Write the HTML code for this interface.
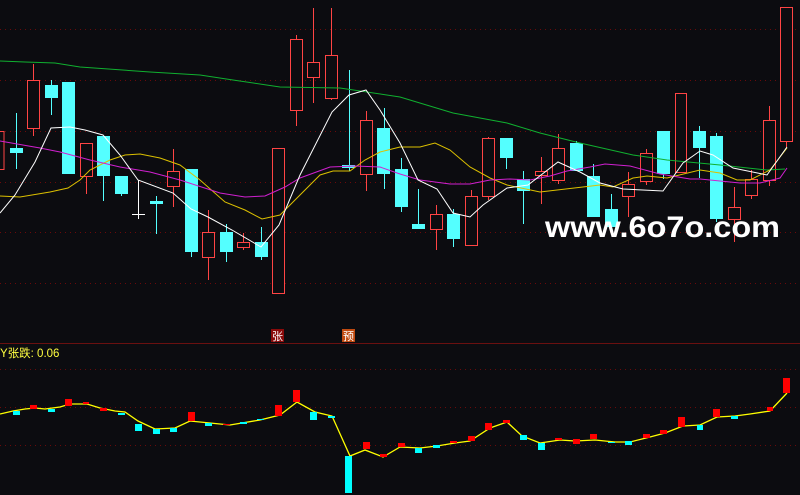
<!DOCTYPE html>
<html><head><meta charset="utf-8"><style>
html,body{margin:0;padding:0;background:#0c0c10;width:800px;height:495px;overflow:hidden}
svg{display:block}
</style></head><body>
<svg width="800" height="495" viewBox="0 0 800 495" xmlns="http://www.w3.org/2000/svg" shape-rendering="crispEdges">
<rect width="800" height="495" fill="#0c0c10"/>
<g stroke="#6a0a0a" stroke-width="1" stroke-dasharray="1,4">
<line x1="0" y1="29.5" x2="800" y2="29.5"/>
<line x1="0" y1="80.5" x2="800" y2="80.5"/>
<line x1="0" y1="131.5" x2="800" y2="131.5"/>
<line x1="0" y1="182.5" x2="800" y2="182.5"/>
<line x1="0" y1="232.5" x2="800" y2="232.5"/>
<line x1="0" y1="283.5" x2="800" y2="283.5"/>
<line x1="0" y1="369.5" x2="800" y2="369.5"/>
<line x1="0" y1="407.5" x2="800" y2="407.5"/>
<line x1="0" y1="445.5" x2="800" y2="445.5"/>
</g>
<line x1="0" y1="343.5" x2="800" y2="343.5" stroke="#6a1010" stroke-width="1"/>

<g fill="#54ffff" stroke="#54ffff">
<line x1="16.5" y1="113" x2="16.5" y2="169"/><rect x="10" y="148" width="13" height="5" stroke="none"/>
<line x1="51.5" y1="80" x2="51.5" y2="115"/><rect x="45" y="85" width="13" height="13" stroke="none"/>
<rect x="62" y="82" width="13" height="92" stroke="none"/>
<line x1="103.5" y1="136" x2="103.5" y2="201"/><rect x="97" y="136" width="13" height="40" stroke="none"/>
<line x1="121.5" y1="176" x2="121.5" y2="196"/><rect x="115" y="176" width="13" height="18" stroke="none"/>
<line x1="156.5" y1="196" x2="156.5" y2="234"/><rect x="150" y="201" width="13" height="3" stroke="none"/>
<line x1="191.5" y1="169" x2="191.5" y2="257"/><rect x="185" y="169" width="13" height="83" stroke="none"/>
<line x1="226.5" y1="224" x2="226.5" y2="262"/><rect x="220" y="232" width="13" height="20" stroke="none"/>
<line x1="261.5" y1="227" x2="261.5" y2="260"/><rect x="255" y="242" width="13" height="15" stroke="none"/>
<line x1="349.5" y1="70" x2="349.5" y2="171"/><rect x="342" y="165" width="13" height="3" stroke="none"/>
<line x1="384.5" y1="108" x2="384.5" y2="189"/><rect x="377" y="128" width="13" height="46" stroke="none"/>
<line x1="401.5" y1="158" x2="401.5" y2="212"/><rect x="395" y="169" width="13" height="38" stroke="none"/>
<line x1="418.5" y1="189" x2="418.5" y2="229"/><rect x="412" y="224" width="13" height="5" stroke="none"/>
<line x1="453.5" y1="209" x2="453.5" y2="247"/><rect x="447" y="214" width="13" height="25" stroke="none"/>
<line x1="506.5" y1="138" x2="506.5" y2="169"/><rect x="500" y="138" width="13" height="20" stroke="none"/>
<line x1="523.5" y1="171" x2="523.5" y2="224"/><rect x="517" y="179" width="13" height="12" stroke="none"/>
<line x1="576.5" y1="141" x2="576.5" y2="171"/><rect x="570" y="143" width="13" height="28" stroke="none"/>
<line x1="593.5" y1="164" x2="593.5" y2="217"/><rect x="587" y="176" width="13" height="41" stroke="none"/>
<line x1="611.5" y1="194" x2="611.5" y2="227"/><rect x="605" y="209" width="13" height="18" stroke="none"/>
<line x1="663.5" y1="131" x2="663.5" y2="179"/><rect x="657" y="131" width="13" height="43" stroke="none"/>
<line x1="699.5" y1="126" x2="699.5" y2="178"/><rect x="693" y="131" width="13" height="17" stroke="none"/>
<line x1="716.5" y1="133" x2="716.5" y2="222"/><rect x="710" y="136" width="13" height="83" stroke="none"/>
</g>
<g stroke="#ffffff"><line x1="138.5" y1="180" x2="138.5" y2="219"/><line x1="132" y1="214.5" x2="145" y2="214.5"/></g>

<g stroke="#ff4444" fill="#0c0c10">
<rect x="-5" y="131.5" width="9" height="38"/>
<line x1="33.5" y1="64" x2="33.5" y2="136"/><rect x="27.5" y="80.5" width="12" height="48"/>
<line x1="86.5" y1="143" x2="86.5" y2="194"/><rect x="80.5" y="143.5" width="12" height="33"/>
<line x1="173.5" y1="149" x2="173.5" y2="207"/><rect x="167.5" y="171.5" width="12" height="15"/>
<line x1="208.5" y1="210" x2="208.5" y2="280"/><rect x="202.5" y="232.5" width="12" height="25"/>
<line x1="243.5" y1="233" x2="243.5" y2="250"/><rect x="237.5" y="242.5" width="12" height="5"/>
<rect x="272.5" y="148.5" width="12" height="145"/>
<line x1="296.5" y1="35" x2="296.5" y2="126"/><rect x="290.5" y="39.5" width="12" height="71"/>
<line x1="313.5" y1="8" x2="313.5" y2="103"/><rect x="307.5" y="62.5" width="12" height="15"/>
<line x1="331.5" y1="8" x2="331.5" y2="100"/><rect x="325.5" y="55.5" width="12" height="43"/>
<line x1="366.5" y1="111" x2="366.5" y2="191"/><rect x="360.5" y="120.5" width="12" height="54"/>
<line x1="436.5" y1="205" x2="436.5" y2="250"/><rect x="430.5" y="214.5" width="12" height="15"/>
<line x1="471.5" y1="190" x2="471.5" y2="245"/><rect x="465.5" y="196.5" width="12" height="49"/>
<line x1="488.5" y1="137" x2="488.5" y2="200"/><rect x="482.5" y="138.5" width="12" height="58"/>
<line x1="541.5" y1="157" x2="541.5" y2="204"/><rect x="535.5" y="171.5" width="12" height="4"/>
<line x1="558.5" y1="134" x2="558.5" y2="184"/><rect x="552.5" y="148.5" width="12" height="32"/>
<line x1="628.5" y1="172" x2="628.5" y2="217"/><rect x="622.5" y="184.5" width="12" height="12"/>
<line x1="646.5" y1="149" x2="646.5" y2="185"/><rect x="640.5" y="153.5" width="12" height="28"/>
<rect x="675.5" y="93.5" width="11" height="79"/>
<line x1="734.5" y1="187" x2="734.5" y2="242"/><rect x="728.5" y="207.5" width="12" height="12"/>
<line x1="751.5" y1="170" x2="751.5" y2="199"/><rect x="745.5" y="179.5" width="12" height="16"/>
<line x1="769.5" y1="106" x2="769.5" y2="186"/><rect x="763.5" y="120.5" width="12" height="60"/>
<line x1="786.5" y1="141" x2="786.5" y2="147"/><rect x="780.5" y="7.5" width="12" height="134"/>
</g>

<g fill="none" stroke-width="1" shape-rendering="auto">
<polyline stroke="#10b030" points="0,61 25,62 55,63 80,67 150,72 200,75 233,80 280,87 340,88 400,97 453,113 507,123 540,133 580,143 633,155 667,160 720,165 767,170 785,169"/>
<polyline stroke="#dcc000" points="0,196 20,197 50,192 68,188 80,180 90,170 110,160 125,155 140,154 160,158 180,165 200,180 225,202 245,210 262,219 280,215 300,195 320,175 333,171 350,171 365,160 380,152 400,147 420,147 435,143 450,150 470,167 490,178 507,185 540,192 600,185 613,187 633,178 647,176 667,178 700,170 720,173 737,180 750,180 770,170 787,148"/>
<polyline stroke="#d020d0" points="0,141 40,148 60,152 90,160 120,167 150,172 180,180 220,193 245,197 265,196 285,187 300,178 330,167 355,166 380,167 400,174 420,180 450,184 470,184 490,180 510,179 530,180 550,176 567,171 590,167 605,164 630,166 660,174 690,179 700,179 720,181 740,183 760,183 780,178 787,168"/>
<polyline stroke="#ffffff" points="0,213 15,195 35,162 51,128 70,127 85,130 103,135 120,155 138,180 173,193 191,209 208,217 232,230 261,247 279,225 300,175 332,112 349,95 366,90 380,110 400,143 418,180 437,189 453,213 470,217 483,205 507,188 528,185 558,162 580,172 600,183 623,189 663,191 683,163 700,151 713,155 733,168 767,175 787,147"/>
</g>

<text x="545" y="237" fill="#ffffff" font-family="Liberation Sans, DejaVu Sans, sans-serif" font-weight="bold" font-size="30" textLength="235" lengthAdjust="spacingAndGlyphs">www.6o7o.com</text>

<rect x="271" y="329" width="13" height="13" fill="#8a0a0a"/>
<text x="277.5" y="340" fill="#ffffff" font-family="Noto Sans CJK SC, sans-serif" font-size="11" text-anchor="middle">张</text>
<rect x="342" y="329" width="13" height="13" fill="#c04a10"/>
<text x="348.5" y="340" fill="#ffffff" font-family="Noto Sans CJK SC, sans-serif" font-size="11" text-anchor="middle">预</text>

<text x="0" y="357" fill="#ffff40" font-family="Liberation Sans, Noto Sans CJK SC, sans-serif" font-size="11.5">Y张跌: 0.06</text>

<polyline fill="none" stroke="#ffff00" stroke-width="1.3" shape-rendering="auto" points="0,414 13,411 25,409 35,408 45,409 60,407 70,404 87,404 100,408 115,411 125,412 138,421 155,429 175,428 190,421 210,423 230,425 260,420 280,415 297,402 315,412 332,416 350,456 365,450 383,457 400,447 420,448 437,446 455,443 470,441 490,428 507,422 522,436 540,443 560,440 575,441 595,440 615,442 630,442 650,437 665,433 683,426 700,425 717,417 735,416 750,414 770,411 787,393"/>
<g fill="#ff0000">
<rect x="30" y="405" width="7" height="4"/><rect x="65" y="399" width="7" height="7"/><rect x="83" y="402" width="6" height="2"/>
<rect x="100" y="408" width="7" height="3"/><rect x="188" y="412" width="7" height="9"/><rect x="223" y="424" width="7" height="1"/>
<rect x="275" y="405" width="7" height="11"/><rect x="293" y="390" width="7" height="12"/><rect x="363" y="442" width="7" height="7"/>
<rect x="380" y="454" width="7" height="3"/><rect x="398" y="443" width="7" height="4"/><rect x="450" y="441" width="7" height="2"/>
<rect x="468" y="436" width="7" height="5"/><rect x="485" y="423" width="7" height="7"/><rect x="503" y="420" width="7" height="3"/>
<rect x="555" y="438" width="7" height="2"/><rect x="573" y="439" width="7" height="5"/><rect x="590" y="434" width="7" height="5"/>
<rect x="643" y="434" width="7" height="4"/><rect x="660" y="430" width="7" height="4"/><rect x="678" y="417" width="7" height="10"/>
<rect x="713" y="409" width="7" height="8"/><rect x="767" y="407" width="6" height="4"/><rect x="783" y="378" width="7" height="15"/>
</g>
<g fill="#00ffff">
<rect x="13" y="411" width="7" height="4"/><rect x="48" y="409" width="7" height="3"/><rect x="118" y="413" width="7" height="2"/>
<rect x="135" y="424" width="7" height="7"/><rect x="153" y="429" width="7" height="5"/><rect x="170" y="428" width="7" height="4"/>
<rect x="205" y="423" width="7" height="3"/><rect x="240" y="422" width="7" height="2"/><rect x="257" y="419" width="7" height="1"/>
<rect x="310" y="412" width="7" height="8"/><rect x="328" y="416" width="7" height="2"/><rect x="345" y="456" width="7" height="37"/>
<rect x="415" y="448" width="7" height="5"/><rect x="433" y="445" width="7" height="3"/><rect x="520" y="435" width="7" height="5"/>
<rect x="538" y="443" width="7" height="7"/><rect x="608" y="442" width="7" height="1"/><rect x="625" y="441" width="7" height="4"/>
<rect x="697" y="425" width="6" height="5"/><rect x="731" y="416" width="7" height="3"/>
</g>
</svg>
</body></html>
